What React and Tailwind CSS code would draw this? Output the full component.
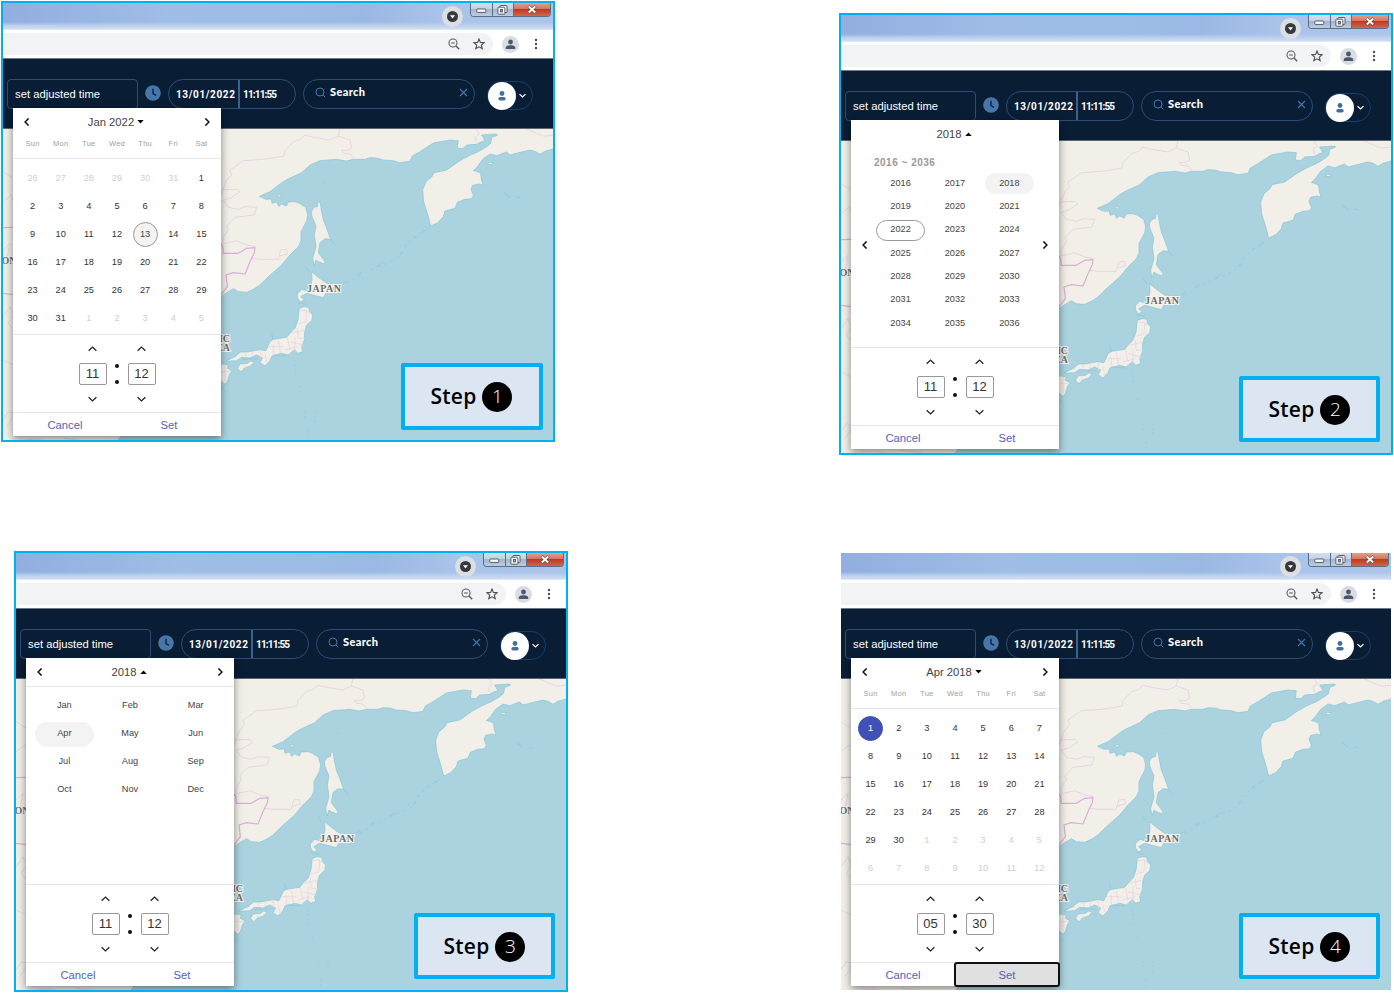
import React from "react";

const Chevron = ({ d, w = 8, h = 8, sw = 1.5, color = "#111" }) => (
  <svg width={w} height={h} viewBox="0 0 10 10" fill="none" stroke={color} strokeWidth={sw} className="shrink-0">
    <path d={d} />
  </svg>
);
const LEFT = "M7 0.5 L2.6 5 L7 9.5";
const RIGHT = "M3 0.5 L7.4 5 L3 9.5";
const UP = "M0.7 7 L5 2.9 L9.3 7";
const DOWN = "M0.7 3 L5 7.1 L9.3 3";

function TitleBar() {
  return (
    <div className="flex h-[27px] shrink-0 items-start bg-[linear-gradient(to_bottom,transparent_70%,#bdd0ed_84%,#cfdff2_97%,#f4f8fc_100%),linear-gradient(to_right,#92aee0_0%,#9fbde6_30%,#9dbde6_50%,#9ab8e3_65%,#a9c3ea_80%,#abc4e8_100%)]">
      <div className="ml-[439px] mt-[3px] flex size-[21px] items-center justify-center rounded-full bg-[#dbdfe4]">
        <svg width="11" height="11" viewBox="0 0 11 11">
          <circle cx="5.5" cy="5.5" r="5.5" fill="#35383d" />
          <path d="M3 4.3h5L5.5 7.6z" fill="#fff" />
        </svg>
      </div>
      <div className="ml-[7px] flex h-[14px] overflow-hidden rounded-b-[4px] border border-t-0 border-[#5d6d88]">
        <div className="flex w-[22px] items-center justify-center border-r border-[#5d6d88] bg-[linear-gradient(#d3deef_0%,#c5d2e6_45%,#a3b6d0_50%,#bccce2_100%)]">
          <svg width="11" height="6" viewBox="0 0 11 6" className="mt-[3px]">
            <rect x="0.8" y="1" width="9" height="3.4" rx="0.6" fill="#fff" stroke="#555b66" strokeWidth="1" />
          </svg>
        </div>
        <div className="flex w-[21px] items-center justify-center border-r border-[#5d6d88] bg-[linear-gradient(#d3deef_0%,#c5d2e6_45%,#a3b6d0_50%,#bccce2_100%)]">
          <svg width="11" height="10" viewBox="0 0 11 10" fill="#fff" stroke="#555b66" strokeWidth="1" className="mr-[2px]">
            <rect x="3" y="0.5" width="7" height="7" rx="0.6" />
            <rect x="0.9" y="2.2" width="7" height="7" rx="0.6" />
            <rect x="3.4" y="4.5" width="2" height="2.4" fill="#a3b6d0" />
          </svg>
        </div>
        <div className="flex w-[36px] items-center justify-center bg-[linear-gradient(#e3a08f_0%,#d57560_45%,#bd3a22_50%,#d2654b_100%)]">
          <svg width="10" height="9" viewBox="0 0 10 9">
            <path d="M1.6 1.3 L8.4 7.7 M8.4 1.3 L1.6 7.7" stroke="#6b3a3a" strokeWidth="3.2" />
            <path d="M1.8 1.5 L8.2 7.5 M8.2 1.5 L1.8 7.5" stroke="#fff" strokeWidth="2" />
          </svg>
        </div>
      </div>
    </div>
  );
}

function AddressBar() {
  return (
    <div className="flex h-[29px] shrink-0 items-center border-b border-[#6f7885] bg-white">
      <div className="flex h-[22px] w-[490px] items-center justify-end rounded-r-full bg-[#f1f3f4]">
        <svg width="12" height="12" viewBox="0 0 12 12" fill="none" stroke="#5b5f64" strokeWidth="1.1">
          <circle cx="5" cy="5" r="4" />
          <path d="M3.2 5h3.6" />
          <path d="M8 8l3.2 3.2" strokeWidth="1.5" />
        </svg>
        <svg width="12" height="12" viewBox="0 0 12 12" fill="none" stroke="#4b4f54" strokeWidth="1.1" className="ml-[13px] mr-[8px]">
          <path d="M6 1l1.4 3.4 3.7.3-2.8 2.4.9 3.6L6 8.8l-3.2 1.9.9-3.6L.9 4.7l3.7-.3z" />
        </svg>
      </div>
      <div className="ml-[9px] flex size-[17px] items-center justify-center rounded-full bg-[#dadce3]">
        <svg width="11" height="11" viewBox="0 0 11 11" fill="#4d566a">
          <circle cx="5.5" cy="3" r="2.4" />
          <path d="M0.8 10V8.4C.8 6.8 3.6 6.2 5.5 6.2s4.700.6 4.700 2.200V10z" />
        </svg>
      </div>
      <svg width="4" height="12" viewBox="0 0 4 12" fill="#4b4f54" className="ml-[15px]">
        <circle cx="2" cy="2" r="1.2" />
        <circle cx="2" cy="6" r="1.2" />
        <circle cx="2" cy="10" r="1.2" />
      </svg>
    </div>
  );
}

function Toolbar() {
  return (
    <div className="flex h-[70px] shrink-0 items-start border-b border-[#5d6672] bg-[#091d35] pt-[20px] text-white">
      <div className="ml-[4px] flex h-[30px] w-[131px] items-center rounded-[4px] border border-[#2b4d77] pl-[7px] text-[11.25px] whitespace-nowrap">
        set adjusted time
      </div>
      <svg width="16" height="16" viewBox="0 0 16 16" className="ml-[7px] mt-[6px] shrink-0">
        <circle cx="8" cy="8" r="7.8" fill="#4876a9" />
        <path d="M8 3.800V8.600L11 10.400" fill="none" stroke="#0d2440" strokeWidth="1.400" />
      </svg>
      <div className="ml-[7px] flex h-[30px] w-[128px] items-center rounded-full border border-[#2b4d77] font-['Roboto',sans-serif] font-bold">
        <span className="w-[69px] pl-[7px] pt-px text-[10px] tracking-[0.620px]">13/01/2022</span>
        <span className="flex h-full items-center border-l-2 border-[#3a628f] pl-[3px] pt-px text-[10px] tracking-[-0.850px]">11:11:55</span>
      </div>
      <div className="ml-[7px] flex h-[30px] w-[172px] items-center rounded-full border border-[#2b4d77] pb-[3px] pl-[11px] pr-[6px]">
        <svg width="11" height="11" viewBox="0 0 11 11" fill="none" stroke="#4876a9" strokeWidth="1">
          <circle cx="5" cy="5" r="4" />
          <path d="M8 8l2.300 2.300" />
        </svg>
        <span className="ml-[4px] font-['Lato',sans-serif] text-[11px] font-black tracking-[0.350px]">Search</span>
        <svg width="9" height="9" viewBox="0 0 9 9" stroke="#4876a9" strokeWidth="1.100" className="ml-auto">
          <path d="M1 1l7 7M8 1l-7 7" />
        </svg>
      </div>
      <div className="ml-[12px] mt-[2px] flex h-[29px] w-[46px] items-center rounded-full border border-[#153f6b]">
        <div className="flex size-[28px] shrink-0 items-center justify-center rounded-full bg-white">
          <svg width="8" height="10" viewBox="0 0 8 10" fill="#3f6fa3">
            <circle cx="4" cy="2.500" r="2.400" />
            <rect x="0.300" y="6" width="7.400" height="3.400" rx="1.700" />
          </svg>
        </div>
        <div className="ml-[3px]"><Chevron d={DOWN} w={7} h={7} color="#fff" sw={1.800} /></div>
      </div>
    </div>
  );
}

function MapView() {
  return (
    <svg width="550" height="312" viewBox="0 0 550 312" className="block shrink-0 bg-[#f2efe9]">
      <g transform="translate(207,-9) scale(0.33333)">
        <g stroke="#84c6d7" strokeWidth="2" strokeLinejoin="round">
          <path fill="#aad3df" d="M33 530L50 518 70 506 85 515 110 517 130 508 150 495 175 470 215 435 240 405 265 380 273 362 273 335 290 302 293 285 287 262 268 250 255 245 235 246 229 258 215 252 206 259 200 246 186 250 184 237 168 238 148 229 180 215 215 188 232 178 260 165 275 158 300 135 330 122 380 118 410 123 430 118 465 118 480 113 500 114 520 120 550 122 570 128 600 124 607 108 630 95 650 82 670 69 720 60 745 62 742 84 758 86 770 75 800 73 812 66 825 62 815 45 860 42 862 46 845 52 842 70 830 80 805 95 780 106 750 122 710 150 672 158 666 170 648 185 638 210 641 245 655 290 662 318 683 308 700 290 705 273 735 265 742 247 765 238 785 236 790 226 783 208 788 196 808 192 819 196 814 178 812 160 800 154 790 152 802 140 818 118 840 102 860 107 890 96 900 105 935 96 960 90 975 94 990 103 1005 94 1045 82 1045 980-290 980Z" />
          <g fill="#f2efe9">
            <path d="M325 244L331 250 334 270 340 300 350 325 362 358 345 356 330 368 325 398 345 425 342 432 325 425 318 420 312 438 308 415 318 380 313 345 318 318 306 290 304 275 312 262 322 260Z" />
            <path d="M305 455L325 472 350 490 390 492 368 505 350 515 340 533 310 525 290 520 272 530 283 540 270 546 262 532 262 522 275 508 290 512 300 505 306 480Z" />
            <path d="M268 565L283 560 297 562 298 574 308 585 305 602 290 615 284 635 283 660 275 680 278 695 262 700 254 688 235 705 215 700 186 708 180 722 165 738 150 728 158 714 140 705 120 714 95 712 80 722 48 724 65 712 80 705 92 696 112 696 150 689 168 692 180 665 190 658 230 652 240 640 255 625 264 600Z" />
            <path d="M83 745L90 732 112 730 122 723 132 727 122 738 103 744 95 754 88 752Z" />
            <path d="M20 735L40 732 55 735 52 745 66 752 58 765 52 785 45 793 30 780Z" />
            <path d="M832 134L838 127 851 128 845 133Z" />
            <path d="M882 218L900 232M918 230L932 235M202 225L213 224 212 230 204 231Z" />
            <path d="M-170 990L-155 967-135 965-130 990Z" />
            <path d="M628 342L650 330M610 355L622 348M570 405L580 396M500 440L522 426M440 466L455 457M400 490L412 481M362 358L376 375" />
          </g>
        </g>
        <g fill="none" stroke="#8ccadb" strokeWidth="2.500" strokeDasharray="7 14">
          <path d="M392 500L470 455 530 430 565 412 590 372 628 342" />
          <path d="M253 720L258 765M268 800L270 815M285 875L285 900M315 875L315 905M294 930L294 950M345 188L345 192" strokeDasharray="4 9" />
          <path d="M48 722L80 708M95 718L145 716M190 705L230 708M285 440L297 455M265 548L290 553M185 640L190 660M33 800L45 815" strokeDasharray="none" />
        </g>
        <g fill="none" stroke="#e7d6e1" strokeWidth="3" strokeLinejoin="round">
          <path d="M33 225L50 180 65 165 60 150 75 140 100 122 160 118 200 112 222 108 225 92 250 65 272 58 285 45 310 52 360 60 385 48 390 25" />
          <path d="M385 48L420 60 425 85 412 92 395 90 400 100 420 102 435 118" />
          <path d="M33 210L80 208 90 216 60 235 40 240 55 262 85 268 105 260 140 262 132 285 75 292 50 318 55 330 40 350 38 372 80 362 110 375 138 380" />
          <path d="M125 415L150 418 205 418 212 390 230 388 232 402 210 408" />
          <path d="M798 25L808 42 795 52 800 68M945 25L975 38 1000 48 1045 45" />
          <path d="M270 572L290 570 288 605 265 612M285 570L300 580M245 640L285 630M262 625L265 655 285 655M232 652L240 690M205 662L212 700M175 680L220 680M190 675L190 705M240 665L280 675M225 690L262 680M150 690L152 715M130 692L125 712M105 698L108 712M102 735L110 745M33 755L60 755M45 735L45 785M255 650L255 695M165 705L172 730" strokeWidth="2.500" />
          <path d="M-621 25M-621 155L-605 165-590 175M-621 245L-595 225-585 260M-621 390L-600 370-610 420-590 430M-621 590L-600 560-590 585-605 610-590 628M-621 720L-590 735M-621 900L-605 875-590 880-595 900-610 920M-560 960L-520 957-480 965M-440 955L-380 962" />
        </g>
        <g fill="none" stroke="#d9aed6" strokeWidth="3.500" strokeLinejoin="round">
          <path d="M30 370L38 378 40 400 85 400 110 385 135 383 133 398 120 425 105 462 70 458 48 465 52 500 33 525" />
          <path d="M-621 323L-590 322M-621 520L-590 524" />
        </g>
      </g>
      <g fontFamily="'Liberation Serif', 'Noto Sans', serif" fontWeight="bold" fontSize="10" fill="#6a6a6a" stroke="#f6f4f0" strokeWidth="2" paintOrder="stroke">
        <text x="304" y="162.500" textLength="34">JAPAN</text>
        <text x="227" y="213" textAnchor="end">IC</text>
        <text x="227" y="222" textAnchor="end">EA</text>
        <text x="-1.500" y="135">ON</text>
      </g>
    </svg>
  );
}

function Title({ text, up }) {
  return (
    <div className="-ml-[2px] flex items-center gap-[3px] text-[11.25px] text-[#444]">
      {text}
      <svg width="7" height="4" viewBox="0 0 7 4" fill="#000">
        <path d={up ? "M0.300 4h6.400L3.500 0.400z" : "M0.300 0h6.400L3.500 3.600z"} />
      </svg>
    </div>
  );
}

function Header({ text, up, arrows = true }) {
  return (
    <div className="flex h-[28px] items-center justify-between px-[10px]">
      {arrows ? <Chevron d={LEFT} sw={1.800} /> : <span />}
      <Title text={text} up={up} />
      {arrows ? <Chevron d={RIGHT} sw={1.800} /> : <span />}
    </div>
  );
}

const range = (a, b) => Array.from({ length: b - a + 1 }, (_, i) => a + i);

function DayView({ title, before, count, after, selected, filled }) {
  const cells = [
    ...before.map((n) => ({ n, out: true })),
    ...range(1, count).map((n) => ({ n })),
    ...after.map((n) => ({ n, out: true })),
  ];
  return (
    <>
      <Header text={title} />
      <div className="grid h-[23px] grid-cols-7 border-b-[1.500px] border-[#e6e6e6] px-[5.500px] pt-[2px] text-center text-[7.500px] leading-[11px] tracking-[0.200px] text-[#a0a0a0]">
        {["Sun", "Mon", "Tue", "Wed", "Thu", "Fri", "Sat"].map((d) => <span key={d}>{d}</span>)}
      </div>
      <div className="mt-[5px] grid auto-rows-[28px] grid-cols-7 px-[5.500px] text-[9.200px]">
        {cells.map((c, i) => {
          const sel = !c.out && c.n === selected;
          const style = sel
            ? filled
              ? "border border-[#3f51b5] bg-[#3f51b5] text-white"
              : "border border-[#999] bg-[#f3f3f3] text-[#444]"
            : c.out
              ? "border border-transparent text-[#cfcfcf]"
              : "border border-transparent text-[#333]";
          return (
            <div key={i} className="flex items-center justify-center">
              <span className={"flex size-[25px] shrink-0 items-center justify-center rounded-full pb-[1px] leading-[12px] " + style}>{c.n}</span>
            </div>
          );
        })}
      </div>
    </>
  );
}

function YearView() {
  return (
    <>
      <Header text="2018" up arrows={false} />
      <div className="mt-[9px] pl-[23px] text-[10px] font-bold leading-[12px] tracking-[0.500px] text-[#999]">2016 ~ 2036</div>
      <div className="mt-[3px] flex items-center justify-between px-[10px]">
        <div className="-mt-[18px]"><Chevron d={LEFT} sw={1.800} /></div>
        <div className="-mx-2 grid auto-rows-[23.400px] grid-cols-3 text-[9.200px] text-[#444]">
          {range(2016, 2036).map((y) => (
            <div key={y} className="flex w-[54.400px] items-center justify-center">
              <span
                className={
                  "flex h-[21px] w-[49px] items-center justify-center rounded-full pb-[0.500px] " +
                  (y === 2018 ? "bg-[#f3f3f3]" : y === 2022 ? "border border-[#999]" : "")
                }
              >
                {y}
              </span>
            </div>
          ))}
        </div>
        <div className="-mt-[18px]"><Chevron d={RIGHT} sw={1.800} /></div>
      </div>
    </>
  );
}

function MonthView() {
  return (
    <>
      <div className="border-b-[1.500px] border-[#e6e6e6]"><Header text="2018" up /></div>
      <div className="mt-[5px] grid auto-rows-[28px] grid-cols-3 px-[5.500px] text-[9.200px] text-[#444]">
        {["Jan", "Feb", "Mar", "Apr", "May", "Jun", "Jul", "Aug", "Sep", "Oct", "Nov", "Dec"].map((m) => (
          <div key={m} className="flex items-center justify-center">
            <span className={"flex h-[25px] w-[59px] items-center justify-center rounded-full pb-[1px] " + (m === "Apr" ? "bg-[#f3f3f3]" : "")}>{m}</span>
          </div>
        ))}
      </div>
    </>
  );
}

function Spinner({ value }) {
  return (
    <div className="flex w-[28px] flex-col items-center">
      <Chevron d={UP} w={9} h={10} sw={1.400} color="#222" />
      <div className="my-[9px] flex h-[22px] w-[28px] items-center justify-center rounded-[2px] border border-[#999] text-[13px] text-[#333]">{value}</div>
      <Chevron d={DOWN} w={9} h={10} sw={1.400} color="#222" />
    </div>
  );
}

function Picker({ children, hour, minute, setFocused, tall }) {
  return (
    <div className={"absolute left-[10px] top-[105px] flex w-[208px] flex-col bg-white shadow-[0_3px_8px_rgba(0,0,0,0.450)] " + (tall ? "h-[329px]" : "h-[328px]")}>
      <div className={tall ? "h-[227px]" : "h-[226px]"}>{children}</div>
      <div className="flex h-[79px] justify-center border-y-[1.500px] border-[#e6e6e6] pt-[9px]">
        <Spinner value={hour} />
        <div className="flex w-[21px] flex-col items-center gap-[12px] pt-[20px]">
          <i className="size-[4px] rounded-full bg-[#111]" />
          <i className="size-[4px] rounded-full bg-[#111]" />
        </div>
        <Spinner value={minute} />
      </div>
      <div className="grid flex-1 grid-cols-2 text-[11.250px] text-[#5261be]">
        <button className="pt-px">Cancel</button>
        {setFocused ? (
          <button className="-mx-px -mb-px -mt-px rounded-[3px] border-2 border-[#111] bg-[#e0e0e0] pt-px">Set</button>
        ) : (
          <button className="pt-px">Set</button>
        )}
      </div>
    </div>
  );
}

function Panel({ step, frame = true, place, badge = "h-[66px] w-[141px] right-[11px] pt-px", children }) {
  return (
    <section className={"w-[554px] shrink-0 border-2 " + (frame ? "border-[#00b0f0] " : "border-transparent ") + place}>
      <div className="relative flex h-full flex-col overflow-hidden">
        <TitleBar />
        <AddressBar />
        <Toolbar />
        <MapView />
        {children}
        <div className={"absolute bottom-[11px] flex items-center justify-center gap-[6px] rounded-[2px] border-4 border-[#00b0f0] bg-[#dce6f2] text-black " + badge}>
          <span className="font-['Open_Sans',sans-serif] text-[21px] font-semibold leading-none tracking-[0.200px]">Step</span>
          <span className="flex size-[30px] items-center justify-center rounded-full bg-black font-['Open_Sans',sans-serif] text-[19px] font-light leading-none text-white">{step}</span>
        </div>
      </div>
    </section>
  );
}

export default function App() {
  return (
    <main className="flex h-[993px] w-[1394px] justify-between overflow-hidden bg-white pl-px pr-px font-['Liberation_Sans',Arial,sans-serif]">
      <div className="flex flex-col">
        <Panel step="1" place="mt-[1px] h-[441px]" badge="h-[67px] w-[142px] right-[10px] -mb-px pr-px">
          <Picker hour="11" minute="12">
            <DayView title="Jan 2022" before={range(26, 31)} count={31} after={range(1, 5)} selected={13} />
          </Picker>
        </Panel>
        <Panel step="3" place="ml-[13px] mt-[109px] h-[441px]">
          <Picker hour="11" minute="12"><MonthView /></Picker>
        </Panel>
      </div>
      <div className="flex flex-col">
        <Panel step="2" place="mt-[13px] h-[442px]">
          <Picker hour="11" minute="12" tall><YearView /></Picker>
        </Panel>
        <Panel step="4" frame={false} place="mt-[96px] h-[441px]">
          <Picker hour="05" minute="30" setFocused>
            <DayView title="Apr 2018" before={[]} count={30} after={range(1, 12)} selected={1} filled />
          </Picker>
        </Panel>
      </div>
    </main>
  );
}
